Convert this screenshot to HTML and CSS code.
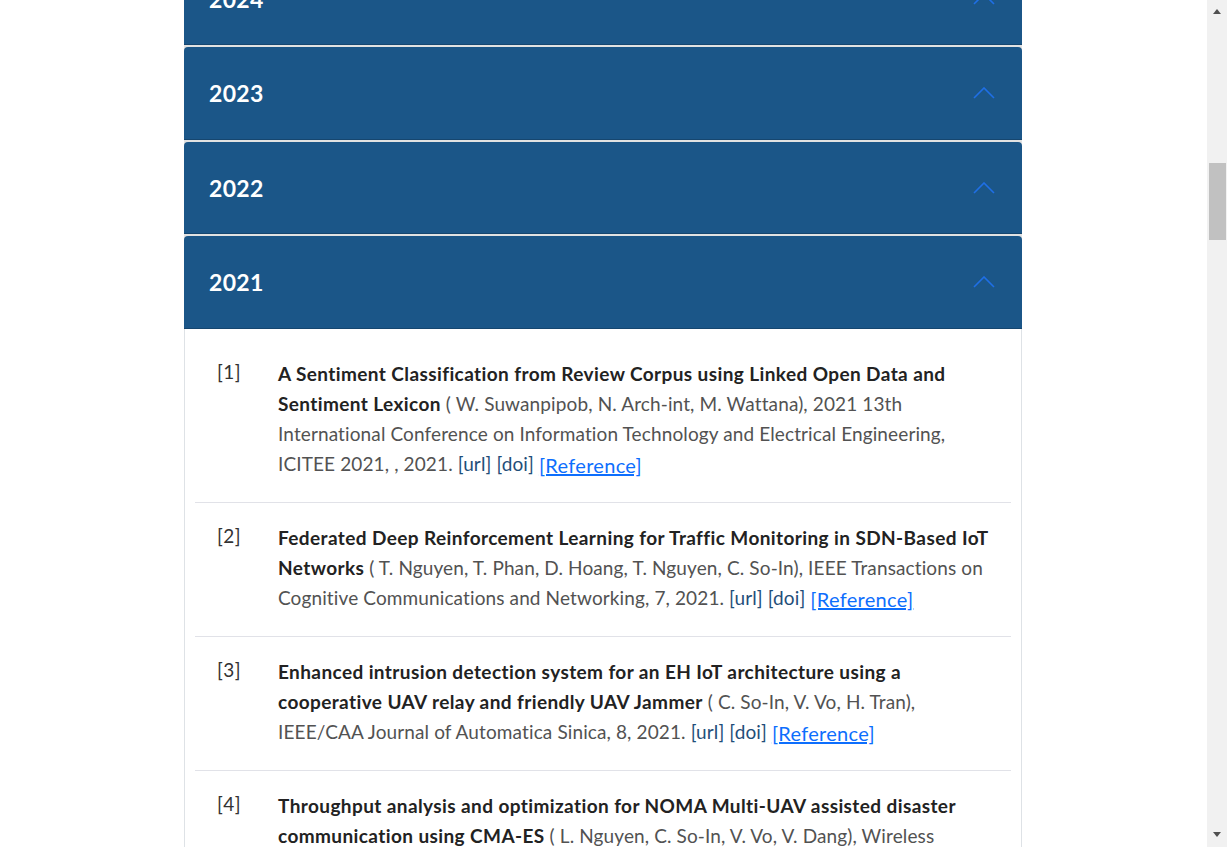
FILE: index.html
```html
<!DOCTYPE html>
<html lang="en">
<head>
<meta charset="utf-8">
<title>Publications</title>
<link rel="stylesheet" href="styles.css">
</head>
<body>
<div class="page">
  <main class="content">
    <div class="accordion">
      <section class="acc-item">
        <div class="acc-header">
          <h2>2024</h2>
          <svg class="chev" width="22" height="12" viewBox="0 0 22 12" aria-hidden="true"><polyline points="1,11 11,1 21,11"/></svg>
        </div>
      </section>
      <section class="acc-item">
        <div class="acc-header">
          <h2>2023</h2>
          <svg class="chev" width="22" height="12" viewBox="0 0 22 12" aria-hidden="true"><polyline points="1,11 11,1 21,11"/></svg>
        </div>
      </section>
      <section class="acc-item">
        <div class="acc-header">
          <h2>2022</h2>
          <svg class="chev" width="22" height="12" viewBox="0 0 22 12" aria-hidden="true"><polyline points="1,11 11,1 21,11"/></svg>
        </div>
      </section>
      <section class="acc-item open">
        <div class="acc-header">
          <h2>2021</h2>
          <svg class="chev" width="22" height="12" viewBox="0 0 22 12" aria-hidden="true"><polyline points="1,11 11,1 21,11"/></svg>
        </div>
        <div class="acc-body">
          <ol class="pubs">
            <li class="pub">
              <span class="num">[1]</span>
              <p class="cite"><span class="title">A Sentiment Classification from Review Corpus using Linked Open Data and Sentiment Lexicon</span> ( W. Suwanpipob, N. Arch-int, M. Wattana), 2021 13th International Conference on Information Technology and Electrical Engineering, ICITEE 2021, , 2021. <a class="link" href="#">[url]</a> <a class="link" href="#">[doi]</a> <a class="ref" href="#">[Reference]</a></p>
            </li>
            <li class="pub">
              <span class="num">[2]</span>
              <p class="cite"><span class="title">Federated Deep Reinforcement Learning for Traffic Monitoring in SDN-Based IoT Networks</span> ( T. Nguyen, T. Phan, D. Hoang, T. Nguyen, C. So-In), IEEE Transactions on Cognitive Communications and Networking, 7, 2021. <a class="link" href="#">[url]</a> <a class="link" href="#">[doi]</a> <a class="ref" href="#">[Reference]</a></p>
            </li>
            <li class="pub">
              <span class="num">[3]</span>
              <p class="cite"><span class="title">Enhanced intrusion detection system for an EH IoT architecture using a cooperative UAV relay and friendly UAV Jammer</span> ( C. So-In, V. Vo, H. Tran), IEEE/CAA Journal of Automatica Sinica, 8, 2021. <a class="link" href="#">[url]</a> <a class="link" href="#">[doi]</a> <a class="ref" href="#">[Reference]</a></p>
            </li>
            <li class="pub">
              <span class="num">[4]</span>
              <p class="cite"><span class="title">Throughput analysis and optimization for NOMA Multi-UAV assisted disaster communication using CMA-ES</span> ( L. Nguyen, C. So-In, V. Vo, V. Dang), Wireless Communications and Mobile Computing, 2021, 2021. <a class="link" href="#">[url]</a> <a class="link" href="#">[doi]</a> <a class="ref" href="#">[Reference]</a></p>
            </li>
          </ol>
        </div>
      </section>
    </div>
  </main>
  <div class="scrollbar" aria-hidden="true">
    <span class="sb-up"></span>
    <span class="sb-thumb"></span>
    <span class="sb-down"></span>
  </div>
</div>
</body>
</html>
```
FILE: styles.css
```css
html, body {
  margin: 0;
  height: 100%;
  overflow: hidden;
}
body {
  font-family: Lato, "Noto Sans", "Liberation Sans", sans-serif;
  background: #fff;
  color: #333;
}
.page {
  display: flex;
  height: 100vh;
}
.content {
  flex: 1;
  overflow: hidden;
  padding-right: 1px;
}
.accordion {
  width: 838px;
  margin: -47.5px auto 0;
  background: #e2e2e2;
  display: flex;
  flex-direction: column;
  gap: 2px;
}
.acc-header {
  box-sizing: border-box;
  height: 92.5px;
  display: flex;
  align-items: center;
  justify-content: space-between;
  padding: 0 27px 0 25px;
  background: #1b5688;
  color: #fff;
  border-radius: 4px 4px 0 0;
  box-shadow: inset 0 -1px 0 rgba(0, 0, 0, 0.18);
}
.acc-header h2 {
  margin: 0;
  font-size: 23px;
  font-weight: 700;
  line-height: 30px;
  letter-spacing: 0.3px;
}
.chev polyline {
  fill: none;
  stroke: #1f6fe6;
  stroke-width: 1.6;
}
.acc-body {
  background: #fff;
  border-left: 1px solid #dee2e6;
  border-right: 1px solid #dee2e6;
  padding: 10px;
}
.pubs {
  list-style: none;
  margin: 0;
  padding: 0;
}
.pub {
  display: grid;
  grid-template-columns: 68px 1fr;
  column-gap: 15px;
  padding: 20px 16px 22px 0;
  border-bottom: 1px solid #e1e2e8;
}
.num {
  text-align: center;
  font-size: 19px;
  line-height: 26px;
  letter-spacing: 0.5px;
  color: #333;
}
.cite {
  margin: 0;
  font-size: 19px;
  line-height: 30px;
  letter-spacing: 0.12px;
  color: #525252;
}
.title {
  font-weight: 700;
  color: #222;
  letter-spacing: 0.4px;
}
.link {
  color: #1f4e79;
  text-decoration: none;
}
.ref {
  color: #0d6efd;
  font-size: 20px;
  letter-spacing: 0.3px;
  text-decoration: underline;
  vertical-align: -2px;
}
.scrollbar {
  width: 20px;
  flex: none;
  background: #f1f1f1;
  display: flex;
  flex-direction: column;
  align-items: center;
}
.sb-up {
  margin-top: 9px;
  width: 0;
  height: 0;
  border-left: 4.5px solid transparent;
  border-right: 4.5px solid transparent;
  border-bottom: 5px solid #505050;
}
.sb-thumb {
  margin-top: 149px;
  width: 17px;
  height: 77px;
  background: #c1c1c1;
}
.sb-down {
  margin-top: auto;
  margin-bottom: 10px;
  width: 0;
  height: 0;
  border-left: 4.5px solid transparent;
  border-right: 4.5px solid transparent;
  border-top: 5px solid #505050;
}
```
